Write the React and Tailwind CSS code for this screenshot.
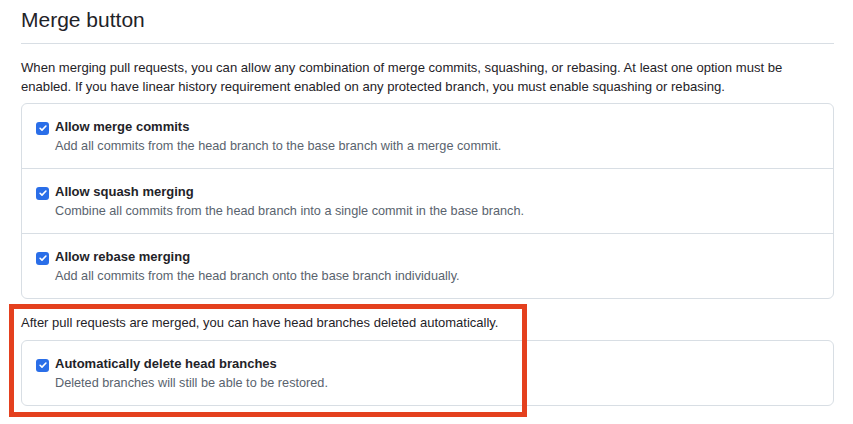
import React from 'react';

const options = [
  { title: 'Allow merge commits', desc: 'Add all commits from the head branch to the base branch with a merge commit.' },
  { title: 'Allow squash merging', desc: 'Combine all commits from the head branch into a single commit in the base branch.' },
  { title: 'Allow rebase merging', desc: 'Add all commits from the head branch onto the base branch individually.' },
];

function Check() {
  return (
    <span className="mt-[4.5px] flex h-[13px] w-[13px] shrink-0 items-center justify-center rounded-[3px] bg-[#2a6ee8]">
      <svg viewBox="0 0 12 12" className="h-[10px] w-[10px]" fill="none">
        <path d="M2.5 6.3l2.3 2.3 4.7-5" stroke="white" strokeWidth="1.9" strokeLinecap="round" strokeLinejoin="round" />
      </svg>
    </span>
  );
}

function Option({ title, desc }) {
  return (
    <div className="flex gap-[6px] px-[14px] pt-[13px] pb-[13px]">
      <Check />
      <div>
        <div className="text-[13px] font-bold leading-[20px] text-[#1f2328]">{title}</div>
        <div className="text-[12.7px] leading-[18px] text-[#59636e]">{desc}</div>
      </div>
    </div>
  );
}

export default function App() {
  return (
    <div className="relative h-[424px] w-[853px] overflow-hidden bg-white pl-[21px] pr-[19px] font-['Liberation_Sans',Arial,sans-serif] text-[#1f2328]">
      <h2 className="border-b border-[#d8dee4] pt-[6px] pb-[9px] text-[21px] leading-[28px]">Merge button</h2>
      <p className="mt-[14px] max-w-[790px] text-[13.1px] leading-[19px]">
        When merging pull requests, you can allow any combination of merge commits, squashing, or rebasing. At least one option must be enabled. If you have linear history requirement enabled on any protected branch, you must enable squashing or rebasing.
      </p>
      <div className="mt-[7px] divide-y divide-[#d8dee4] rounded-[6px] border border-[#d8dee4]">
        {options.map((o) => (
          <Option key={o.title} {...o} />
        ))}
      </div>
      <p className="mt-[14px] text-[13px] leading-[19px]">After pull requests are merged, you can have head branches deleted automatically.</p>
      <div className="mt-[8px] rounded-[6px] border border-[#d8dee4]">
        <Option title="Automatically delete head branches" desc="Deleted branches will still be able to be restored." />
      </div>
      <div className="pointer-events-none absolute left-[9px] top-[304px] h-[113px] w-[518px] border-[5px] border-[#e4401e]" />
    </div>
  );
}
